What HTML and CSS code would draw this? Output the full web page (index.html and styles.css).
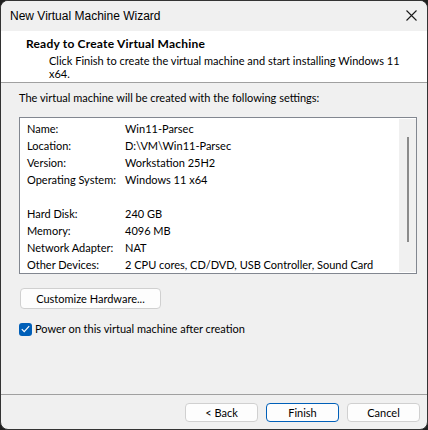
FILE: index.html
```html
<!DOCTYPE html>
<html>
<head>
<meta charset="utf-8">
<link rel="stylesheet" href="styles.css">
</head>
<body>
<div class="window">
  <div class="titlebar">
    <span class="title">New Virtual Machine Wizard</span>
    <svg class="close" width="11" height="11" viewBox="0 0 11 11"><path d="M0.5 0.5 L10.5 10.5 M10.5 0.5 L0.5 10.5" stroke="#1a1a1a" stroke-width="1.1" fill="none"/></svg>
  </div>
  <div class="header">
    <div class="h-title">Ready to Create Virtual Machine</div>
    <div class="h-sub">Click Finish to create the virtual machine and start installing Windows 11<br>x64.</div>
  </div>
  <div class="content">
    <div class="intro">The virtual machine will be created with the following settings:</div>
    <div class="listbox">
      <div class="rows">
        <div class="row"><span class="k">Name:</span><span>Win11-Parsec</span></div>
        <div class="row"><span class="k">Location:</span><span>D:\VM\Win11-Parsec</span></div>
        <div class="row"><span class="k">Version:</span><span>Workstation 25H2</span></div>
        <div class="row"><span class="k">Operating System:</span><span>Windows 11 x64</span></div>
        <div class="row"></div>
        <div class="row"><span class="k">Hard Disk:</span><span>240 GB</span></div>
        <div class="row"><span class="k">Memory:</span><span>4096 MB</span></div>
        <div class="row"><span class="k">Network Adapter:</span><span>NAT</span></div>
        <div class="row"><span class="k">Other Devices:</span><span>2 CPU cores, CD/DVD, USB Controller, Sound Card</span></div>
      </div>
      <div class="scrollbar"><div class="thumb"></div></div>
    </div>
    <button class="btn customize">Customize Hardware...</button>
    <label class="check">
      <span class="box"><svg width="9" height="8" viewBox="0 0 9 8"><path d="M0.8 4.2 L3.2 6.6 L8.2 1.2" stroke="#fff" stroke-width="1.2" fill="none"/></svg></span>
      <span>Power on this virtual machine after creation</span>
    </label>
  </div>
  <div class="footer">
    <button class="btn">&lt; Back</button>
    <button class="btn primary">Finish</button>
    <button class="btn">Cancel</button>
  </div>
</div>
</body>
</html>
```
FILE: styles.css
```css
* { box-sizing: border-box; }
html, body { margin: 0; padding: 0; }
body {
  background: #1f1f1f;
  width: 428px;
  height: 430px;
  font-family: "Lato", "Noto Sans", sans-serif;
  font-size: 11px;
  color: #000;
  overflow: hidden;
}
.window {
  width: 428px;
  height: 430px;
  border: 1px solid #333;
  border-radius: 8px;
  background: #f0f0f0;
  display: flex;
  flex-direction: column;
  overflow: hidden;
}
.titlebar {
  height: 30px;
  flex: none;
  display: flex;
  align-items: flex-start;
  justify-content: space-between;
  padding: 7px 10px 0 9px;
  background: #f0f0f0;
}
.title {
  font-family: "Liberation Sans", Arial, sans-serif;
  font-size: 12px;
  line-height: 16px;
}
.close { margin-top: 2px; }
.header {
  flex: none;
  background: #fff;
  height: 52px;
  border-bottom: 1px solid #a0a0a0;
  padding: 5px 0 0 25px;
}
.h-title {
  font-weight: bold;
  font-size: 12px;
  letter-spacing: 0.2px;
  line-height: 16px;
}
.h-sub { padding-left: 23px; line-height: 13px; margin-top: 2px; white-space: nowrap; }
.content {
  flex: 1;
  padding: 7px 10px 0 18px;
  display: flex;
  flex-direction: column;
  align-items: flex-start;
}
.intro { line-height: 16px; }
.listbox {
  margin-top: 11px;
  width: 398px;
  height: 157px;
  flex: none;
  border: 1px solid #828790;
  background: #fff;
  display: flex;
}
.rows { flex: 1; padding: 2px 0 0 7px; }
.row { height: 17px; line-height: 17px; display: flex; white-space: nowrap; }
.k { width: 98px; flex: none; }
.scrollbar {
  width: 17px;
  margin: 1px 0;
  background: #f0f0f0;
  display: flex;
  justify-content: center;
  padding-top: 18px;
}
.thumb { width: 2px; height: 105px; background: #8b8b8b; }
.btn {
  font-family: inherit;
  font-size: 11px;
  color: #000;
  background: #fdfdfd;
  border: 1px solid #d0d0d0;
  border-radius: 4px;
  height: 19px;
  width: 73px;
  padding: 0;
  line-height: 16px;
}
.customize { margin-top: 14px; margin-left: 1px; width: 141px; height: 21px; }
.check {
  margin-top: 12px;
  display: flex;
  align-items: center;
  gap: 3px;
  line-height: 16px;
}
.box {
  width: 13px;
  height: 13px;
  border-radius: 3px;
  background: #005fb8;
  display: flex;
  align-items: center;
  justify-content: center;
}
.footer {
  flex: none;
  height: 35px;
  border-top: 1px solid #a0a0a0;
  display: flex;
  justify-content: flex-end;
  gap: 8px;
  padding: 8px 7px 0 0;
}
.primary { border-color: #005fb8; }
```
